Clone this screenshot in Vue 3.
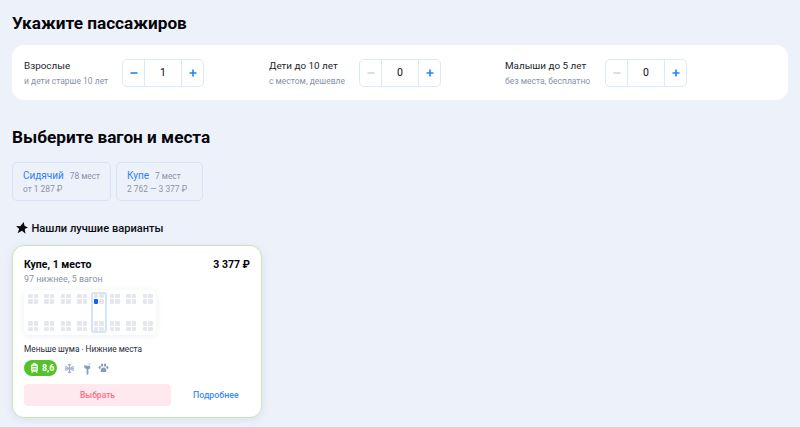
<script setup>
const groups = [
  { label: 'Взрослые', hint: 'и дети старше 10 лет', value: 1, off: false, cls: 'g1' },
  { label: 'Дети до 10 лет', hint: 'с местом, дешевле', value: 0, off: true, cls: 'g2' },
  { label: 'Малыши до 5 лет', hint: 'без места, бесплатно', value: 0, off: true, cls: 'g3' },
]
const comps = [0, 1, 2, 3, 4, 5, 6, 7]
const seats = [0, 1, 2, 3]
</script>

<template>
  <main class="page">
    <h1 class="title first">Укажите пассажиров</h1>
    <section class="panel">
      <div v-for="g in groups" :key="g.label" class="group" :class="g.cls">
        <div class="gtext">
          <div class="glabel">{{ g.label }}</div>
          <div class="ghint">{{ g.hint }}</div>
        </div>
        <div class="counter">
          <span class="cbtn" :class="{ off: g.off }">
            <svg width="10" height="10" viewBox="0 0 10 10"><path d="M1.5 5h7" stroke="currentColor" stroke-width="1.6" /></svg>
          </span>
          <span class="cval">{{ g.value }}</span>
          <span class="cbtn">
            <svg width="10" height="10" viewBox="0 0 10 10"><path d="M1.5 5h7M5 1.5v7" stroke="currentColor" stroke-width="1.6" /></svg>
          </span>
        </div>
      </div>
    </section>

    <h1 class="title second">Выберите вагон и места</h1>
    <div class="tabs">
      <div class="tab t1">
        <div class="tabtop"><span class="tname">Сидячий</span><span class="tcount">78 мест</span></div>
        <div class="tprice">от 1 287 ₽</div>
      </div>
      <div class="tab t2">
        <div class="tabtop"><span class="tname">Купе</span><span class="tcount">7 мест</span></div>
        <div class="tprice">2 762 — 3 377 ₽</div>
      </div>
    </div>

    <div class="best">
      <svg width="12" height="12" viewBox="0 0 24 24"><path d="M15.500 0l1.500 7.500 7 3.500-6.500 3 1.500 9.500-7-6-9 5 3.500-8.500L0 8l8.500.5z" fill="#0b0b12" /></svg>
      <span>Нашли лучшие варианты</span>
    </div>

    <article class="card">
      <div class="cardhead">
        <span>Купе, 1 место</span>
        <span>3 377 ₽</span>
      </div>
      <div class="cardsub">97 нижнее, 5 вагон</div>
      <div class="map">
        <div v-for="c in comps" :key="c" class="comp" :class="{ sel: c === 4 }">
          <div class="seatgrp">
            <i v-for="s in seats" :key="s" class="seat" :class="{ on: c === 4 && s === 2 }"></i>
          </div>
          <div class="seatgrp">
            <i v-for="s in seats" :key="s" class="seat"></i>
          </div>
        </div>
      </div>
      <div class="feat">Меньше шума <span class="dot">•</span> Нижние места</div>
      <div class="icons">
        <span class="rating">
          <svg width="11" height="12" viewBox="0 0 12 14"><path d="M6 .8c1.300 0 1.900.8 2.100 1.500 1.200.1 2 1 2 2.100v5.300c0 .8-.5 1.300-1.200 1.500l1 1.600H8.500l-.8-1.300H4.300l-.8 1.300H2.100l1-1.600c-.7-.2-1.200-.7-1.200-1.500V4.400c0-1.100.8-2 2-2.100C4.100 1.600 4.700.8 6 .8z" fill="#eaf8e0" /><path d="M3.600 5.200h4.800M3.600 8.200h4.800" stroke="#55c22a" stroke-width="1" /></svg>
          8,6
        </span>
        <svg class="ic snow" width="11" height="11" viewBox="0 0 12 12"><path d="M6 .8v10.400M1.500 3.400l9 5.200M10.500 3.400l-9 5.200M4.400 1.400L6 3l1.600-1.600M4.400 10.600L6 9l1.600 1.600M1 5.200l2.200.8-2.200.8M11 5.200L8.800 6l2.200.8" stroke="#a3b0c6" stroke-width="1.200" fill="none" /></svg>
        <svg class="ic lamp" width="9" height="13" viewBox="0 0 8 12"><path d="M.8 3l5.400.8.6 2-2 .8v5H3.200V6.500L1.200 5.500z" fill="#8c9bb5" /><path d="M3.800 2.200L6.500.8l1 1.500-1.500 1" fill="#d5dde9" /></svg>
        <svg class="ic paw" width="11" height="10" viewBox="0 0 13 12"><g fill="#8c9bb5"><ellipse cx="1.900" cy="5.400" rx="1.300" ry="1.700" /><ellipse cx="4.700" cy="2.500" rx="1.400" ry="1.900" /><ellipse cx="8.300" cy="2.500" rx="1.400" ry="1.900" /><ellipse cx="11.100" cy="5.400" rx="1.300" ry="1.700" /><path d="M6.500 5.500c1.800 0 3.500 2 3.500 3.700 0 1.300-1 1.800-2 1.600-1-.2-2-.2-3 0-1 .2-2-.3-2-1.600 0-1.700 1.700-3.700 3.500-3.700z" /></g></svg>
      </div>
      <div class="actions">
        <button class="pick">Выбрать</button>
        <span class="more">Подробнее</span>
      </div>
    </article>
  </main>
</template>

<style scoped>
.page {
  box-sizing: border-box;
  width: 800px;
  height: 427px;
  overflow: hidden;
  padding: 0 12px;
  background: #edf1fa;
  font-family: Roboto, "Noto Sans", sans-serif;
  color: #0b0b12;
}
.title {
  margin: 0;
  font-size: 17.200px;
  line-height: 24px;
  font-weight: 700;
  color: #05050a;
}
.first { padding-top: 11px; }
.second { margin-top: 25px; }
.panel {
  display: flex;
  align-items: center;
  height: 55px;
  margin-top: 10px;
  padding-left: 12px;
  background: #fff;
  border-radius: 12px;
}
.group { display: flex; align-items: center; }
.g1 { width: 245px; }
.g2 { width: 236px; }
.g1 .gtext { width: 98px; }
.g2 .gtext { width: 90px; }
.g3 .gtext { width: 100px; }
.glabel { font-size: 9.900px; line-height: 15px; color: #1c1e2a; }
.ghint { margin-top: 2px; font-size: 8.500px; line-height: 12px; color: #8a93a8; white-space: nowrap; }
.counter {
  box-sizing: border-box;
  display: flex;
  width: 82px;
  height: 28px;
  border: 1px solid #dce9fc;
  border-radius: 5px;
  background: #fff;
}
.cbtn {
  display: flex;
  align-items: center;
  justify-content: center;
  width: 21px;
  color: #1f86ff;
}
.cbtn.off { color: #cfd5e0; }
.cval {
  flex: 1;
  text-align: center;
  font-size: 10.500px;
  line-height: 26px;
  border-left: 1px solid #dce9fc;
  border-right: 1px solid #dce9fc;
}
.tabs { display: flex; gap: 5px; margin-top: 13px; }
.tab {
  box-sizing: border-box;
  height: 39px;
  padding: 5px 10px 0;
  border: 1px solid #d5e4fa;
  border-radius: 5px;
}
.t1 { width: 99px; }
.t2 { width: 87px; }
.tabtop { display: flex; align-items: baseline; gap: 6px; white-space: nowrap; }
.tname { font-size: 10px; line-height: 15px; color: #2f80f5; }
.tcount { font-size: 8.300px; color: #8a93a8; }
.tprice { margin-top: 0; font-size: 8.400px; line-height: 13px; color: #8a93a8; white-space: nowrap; }
.best {
  display: flex;
  align-items: center;
  gap: 4px;
  height: 18px;
  margin-top: 18px;
  padding-left: 3.500px;
  font-size: 11.100px;
  font-weight: 500;
}
.card {
  box-sizing: border-box;
  width: 250px;
  height: 173px;
  margin-top: 8px;
  padding: 11px 11px 0;
  background: #fff;
  border: 1px solid #c6e8b4;
  border-radius: 12px;
  box-shadow: 0 2px 8px rgba(120, 140, 180, 0.15);
}
.cardhead {
  display: flex;
  justify-content: space-between;
  font-size: 10.500px;
  line-height: 15px;
  font-weight: 700;
  color: #05050a;
}
.cardsub { margin-top: 1px; font-size: 8.900px; line-height: 12px; color: #8a93a8; }
.map {
  display: flex;
  gap: 6.400px;
  width: 132px;
  height: 45px;
  box-sizing: border-box;
  margin-top: 5px;
  padding: 0 4px;
  border-radius: 5px;
  background: #fff;
  box-shadow: 0 1px 6px rgba(120, 140, 180, 0.14);
}
.comp {
  position: relative;
  display: flex;
  flex-direction: column;
  justify-content: space-between;
  width: 10px;
  height: 37.500px;
  margin-top: 3.500px;
}
.comp.sel::after {
  content: "";
  position: absolute;
  left: -3px;
  right: -3px;
  top: -2px;
  bottom: -2px;
  border: 2px solid #d3e4fd;
  border-radius: 3px;
}
.seatgrp {
  display: grid;
  grid-template-columns: 4.500px 4.500px;
  grid-auto-rows: 4.500px;
  gap: 1px;
}
.seat { display: block; background: #e4e7ed; border-radius: 1px; }
.seat.on { background: #0f62fe; }
.feat { margin-top: 8px; font-size: 8.300px; line-height: 13px; color: #2a2c38; }
.dot { color: #6f7688; font-size: 6px; }
.icons { display: flex; align-items: center; height: 18px; margin-top: 3px; }
.rating {
  box-sizing: border-box;
  display: flex;
  align-items: center;
  gap: 2px;
  width: 33px;
  height: 16px;
  padding-left: 5px;
  border-radius: 8px;
  background: #55c22a;
  color: #fff;
  font-size: 8.800px;
  font-weight: 700;
}
.snow { margin-left: 6.500px; }
.lamp { margin-left: 8px; }
.paw { margin-left: 6.500px; }
.actions { display: flex; align-items: center; margin-top: 7px; }
.pick {
  width: 147px;
  height: 22px;
  padding: 0;
  border: 0;
  border-radius: 4px;
  background: #ffe9ee;
  color: #fb6f86;
  font: inherit;
  font-size: 8.500px;
  font-weight: 500;
}
.more { margin-left: 22px; font-size: 8.800px; font-weight: 500; color: #3f8cf5; }
</style>

<style>
html, body { margin: 0; background: #edf1fa; }
</style>
